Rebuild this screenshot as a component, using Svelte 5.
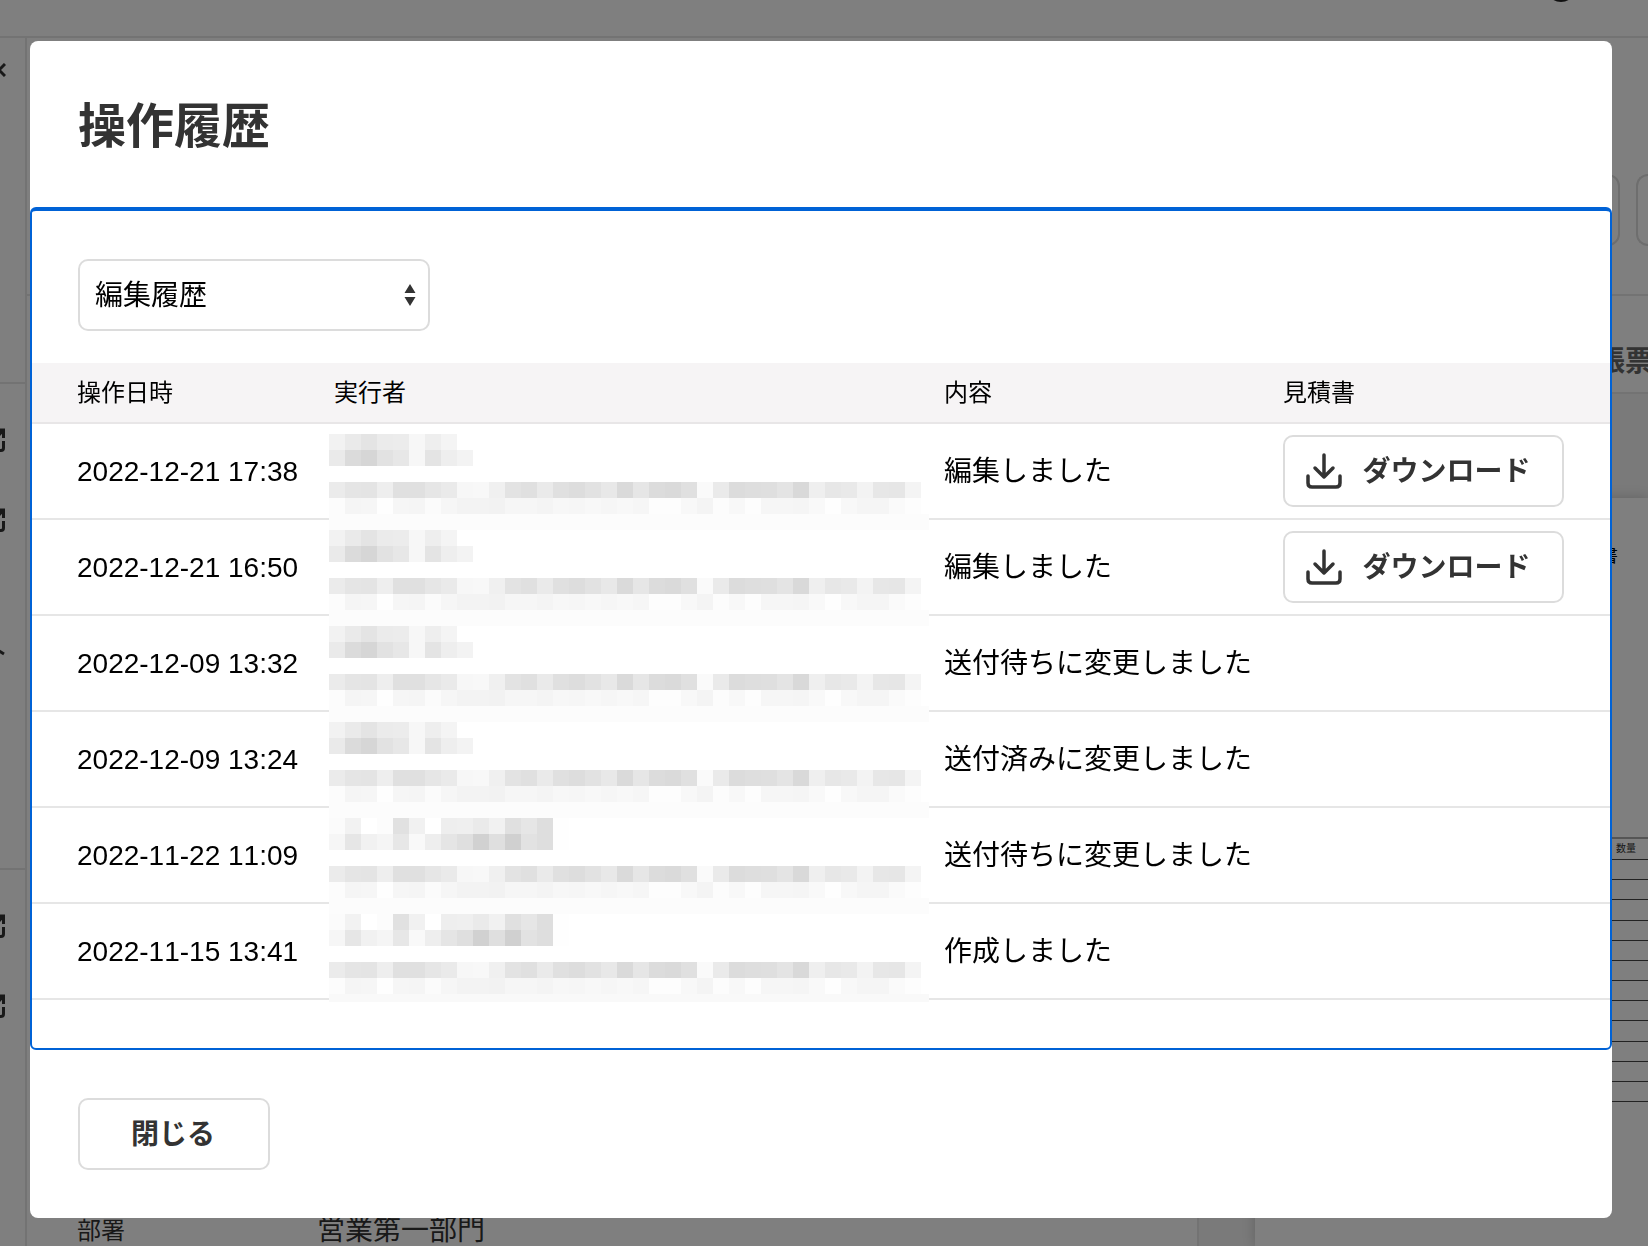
<script>
  const nameA = ['f2eae4ebecf7eef4', 'eadbd6e2e7f7e4eef3'];
  const nameB = ['fbf2fffce1f1ffeeefeaf1e0e6defe', 'f6e6f1f5e7f9eee5dfd1dfd0e2defe'];
  const mail = [
    'ebe5e4eee0e0e6eaf7f8f0e3e0eae0dde2e8dae6dcdae0faeadcdedfe4d9efe7e9f3e7e6f4',
    'fcf5f6fef6f5fbf6f3f3f2f6f6f4f7f6f8f6f8f6fdfdf8f4fcf8fdf6f6f5f9fef8f5f5fafd'
  ];

  const rows = [
    { date: '2022-12-21 17:38', name: nameA, text: '編集しました', file: true },
    { date: '2022-12-21 16:50', name: nameA, text: '編集しました', file: true },
    { date: '2022-12-09 13:32', name: nameA, text: '送付待ちに変更しました' },
    { date: '2022-12-09 13:24', name: nameA, text: '送付済みに変更しました' },
    { date: '2022-11-22 11:09', name: nameB, text: '送付待ちに変更しました' },
    { date: '2022-11-15 13:41', name: nameB, text: '作成しました' }
  ];

  // Each line is a run of two-digit grey levels, one per 16px tile.
  function tiles(name) {
    const lines = [name[0], name[1], '', mail[0], mail[1]];
    return lines.flatMap((line, y) =>
      (line.match(/../g) ?? []).map((g, x) => ({ x: x * 16, y: y * 16, fill: `#${g}${g}${g}` }))
    );
  }

  let kind = $state('edit');
</script>

<div class="page" aria-hidden="true">
  <div class="topbar"><span class="avatar"></span></div>
  <div class="columns">
    <div class="side">
      <div class="block first">
        <svg class="cross" viewBox="0 0 6 14"><path d="M5 1L-1 7L5 13" /></svg>
      </div>
      <div class="block second">
        {@render openIcon()}
        {@render openIcon()}
        <svg class="stroke" viewBox="0 0 6 8"><path d="M-1 2L4 5" /></svg>
      </div>
      <div class="block third">
        {@render openIcon()}
        {@render openIcon()}
      </div>
    </div>
    <div class="content">
      <div class="actions"><span class="ghost"></span><span class="ghost"></span></div>
      <div class="detail">
        <div class="fields"><span class="term">部署</span><span>営業第一部門</span></div>
        <div class="preview">
          <div class="tab">帳票</div>
          <div class="canvas">
            <div class="sheet">
              <div class="sheet-title">見積書</div>
              <div class="lines">
                <div class="line head">数量</div>
                {#each Array(12) as _}
                  <div class="line"></div>
                {/each}
              </div>
            </div>
          </div>
        </div>
      </div>
    </div>
  </div>
</div>

{#snippet openIcon()}
  <svg class="open" viewBox="0 0 6 24"><path d="M0 2H3.500V10M3.500 13V20Q3.500 22.500 1 22.500H0M2.500 3L-2 8" /></svg>
{/snippet}

<div class="overlay">
  <div class="modal" role="dialog" aria-modal="true" aria-labelledby="dialog-title">
    <header><h1 id="dialog-title">操作履歴</h1></header>
    <section class="body">
      <div class="filter">
        <select aria-label="履歴の種類" bind:value={kind}>
          <option value="edit">編集履歴</option>
        </select>
        <svg class="arrows" viewBox="0 0 12 24" aria-hidden="true">
          <path d="M6 1L11.500 10H0.500ZM6 23L11.500 14H0.500Z" />
        </svg>
      </div>
      <table>
        <thead>
          <tr>
            <th class="c-date">操作日時</th>
            <th class="c-user">実行者</th>
            <th class="c-text">内容</th>
            <th class="c-file">見積書</th>
          </tr>
        </thead>
        <tbody>
          {#each rows as row, i}
            <tr>
              <td class="c-date">{row.date}</td>
              <td class="c-user">
                <svg
                  class="mosaic"
                  class:last={i === rows.length - 1}
                  viewBox="0 0 600 96"
                  preserveAspectRatio="xMinYMin slice"
                  shape-rendering="crispEdges"
                  aria-hidden="true"
                >
                  <rect width="600" height="96" fill="#fff" />
                  <rect y="80" width="600" height="16" fill={i === rows.length - 1 ? '#f9f9f9' : '#fcfcfc'} />
                  {#each tiles(row.name) as t}
                    <rect x={t.x} y={t.y} width="16" height="16" fill={t.fill} />
                  {/each}
                </svg>
              </td>
              <td class="c-text">{row.text}</td>
              <td class="c-file">
                {#if row.file}
                  <button type="button" class="download">
                    <svg viewBox="0 0 36 36" aria-hidden="true">
                      <path d="M18 2V24M9 15L18 24L27 15M2 23V30Q2 34 6 34H30Q34 34 34 30V23" />
                    </svg>
                    <span>ダウンロード</span>
                  </button>
                {/if}
              </td>
            </tr>
          {/each}
        </tbody>
      </table>
    </section>
    <footer><button type="button" class="close">閉じる</button></footer>
  </div>
</div>

<style>
  :global(body) {
    font-family: 'Liberation Sans', 'Noto Sans CJK JP', sans-serif;
    font-size: 28px;
    font-kerning: none;
    color: #000;
    background: #fff;
  }
  .page,
  .page *,
  .overlay,
  .overlay * {
    box-sizing: border-box;
  }

  /* Page behind the dialog */
  .page {
    height: 100vh;
    display: flex;
    flex-direction: column;
    overflow: hidden;
    color: #333;
  }
  .topbar {
    flex: none;
    height: 38px;
    border-bottom: 2px solid #e6e6e6;
    display: flex;
    justify-content: flex-end;
    align-items: flex-start;
    padding-right: 72px;
  }
  .avatar {
    width: 30px;
    height: 30px;
    margin-top: -28px;
    border-radius: 50%;
    background: #222;
  }
  .columns {
    flex: 1;
    min-height: 0;
    display: flex;
  }
  .side {
    flex: none;
    width: 27px;
    border-right: 2px solid #e6e6e6;
    display: flex;
    flex-direction: column;
  }
  .block {
    display: flex;
    flex-direction: column;
  }
  .block.first {
    height: 346px;
    padding-top: 25px;
    border-bottom: 2px solid #e6e6e6;
  }
  .block.second {
    height: 486px;
    padding-top: 44px;
    gap: 56px;
    border-bottom: 2px solid #e6e6e6;
  }
  .block.third {
    padding-top: 44px;
    gap: 56px;
  }
  .side svg {
    fill: none;
    stroke: #333;
    stroke-width: 3;
    width: 6px;
    display: block;
  }
  .side .open {
    height: 24px;
  }
  .cross {
    height: 14px;
  }
  .stroke {
    height: 8px;
    margin-top: 61px;
  }
  .content {
    flex: 1;
    min-width: 0;
    display: flex;
    flex-direction: column;
  }
  .actions {
    flex: none;
    height: 258px;
    border-bottom: 2px solid #e6e6e6;
    display: flex;
    justify-content: flex-end;
    align-items: flex-start;
    gap: 16px;
    padding-top: 136px;
  }
  .ghost {
    width: 160px;
    height: 72px;
    border: 2px solid #dcdcdc;
    border-radius: 12px;
  }
  .ghost:last-child {
    width: 12px;
    border-right: 0;
    border-radius: 12px 0 0 12px;
  }
  .detail {
    flex: 1;
    min-height: 0;
    display: flex;
  }
  .fields {
    flex: 1;
    display: flex;
    align-items: flex-end;
    padding-left: 50px;
    line-height: 30px;
  }
  .term {
    width: 240px;
    font-size: 24px;
  }
  .preview {
    flex: none;
    width: 451px;
    border-left: 2px solid #e6e6e6;
    display: flex;
    flex-direction: column;
  }
  .tab {
    flex: none;
    height: 98px;
    border-bottom: 2px solid #e6e6e6;
    padding-left: 398px;
    padding-top: 42px;
    line-height: 48px;
    font-weight: 700;
    white-space: nowrap;
    color: #666;
  }
  .canvas {
    flex: 1;
    padding: 104px 0 0 56px;
    background: #f4f4f4;
    display: flex;
  }
  .sheet {
    flex: 1;
    background: #fff;
    box-shadow: 0 0 12px rgba(0, 0, 0, 0.2);
    padding-top: 44px;
  }
  .sheet-title {
    font-size: 18px;
    line-height: 28px;
    text-align: right;
    padding-right: 30px;
    color: #000;
  }
  .lines {
    margin-top: 267px;
    height: 265px;
    display: flex;
    flex-direction: column;
    border-top: 2px solid #aaa;
  }
  .line {
    flex: 1;
    border-bottom: 1px solid #444;
  }
  .line.head {
    font-size: 10px;
    line-height: 20px;
    font-weight: 400;
    text-align: right;
    padding-right: 12px;
  }

  /* Dialog */
  .overlay {
    position: fixed;
    inset: 0;
    padding: 41px 36px 28px 30px;
    background: rgba(0, 0, 0, 0.5);
    display: flex;
  }
  .modal {
    flex: 1;
    min-width: 0;
    display: flex;
    flex-direction: column;
    background: #fff;
    border-radius: 8px;
    overflow: hidden;
  }
  header {
    padding: 50px 48px 44px;
  }
  h1 {
    margin: 0;
    font-size: 48px;
    line-height: 72px;
    font-weight: 700;
    color: #333;
  }
  .body {
    flex: 1;
    min-height: 0;
    border: 2px solid #0062d6;
    border-top-width: 4px;
    border-radius: 6px;
    padding: 48px 0;
    overflow: hidden;
  }
  .filter {
    position: relative;
    width: 352px;
    margin: 0 46px 32px;
  }
  select {
    appearance: none;
    display: block;
    width: 100%;
    height: 72px;
    padding: 0 48px 0 15px;
    border: 2px solid #dcdcdc;
    border-radius: 10px;
    background: #fff;
    font: inherit;
    color: #000;
  }
  .arrows {
    position: absolute;
    right: 14px;
    top: 24px;
    width: 12px;
    height: 24px;
    fill: #333;
    pointer-events: none;
  }
  table {
    width: 100%;
    table-layout: fixed;
    border-collapse: separate;
    border-spacing: 0;
  }
  th {
    height: 61px;
    padding: 0 0 4px;
    background: #f6f4f5;
    border-bottom: 2px solid #e8e6e7;
    font-size: 24px;
    font-weight: 400;
    text-align: left;
  }
  td {
    height: 96px;
    padding: 2px 0 0;
    border-bottom: 2px solid #e6e6e6;
    line-height: 40px;
    white-space: nowrap;
  }
  .c-date {
    width: 297px;
    padding-left: 45px;
  }
  .c-user {
    position: relative;
    padding-left: 5px;
  }
  .c-text {
    width: 339px;
    padding-left: 15px;
  }
  .c-file {
    width: 342px;
    padding-top: 0;
    padding-left: 15px;
  }
  .mosaic {
    position: absolute;
    left: 0;
    top: 10px;
    width: 100%;
    height: 96px;
  }
  .mosaic.last {
    height: 88px;
  }
  button {
    height: 72px;
    border: 2px solid #dcdcdc;
    border-radius: 10px;
    background: #fff;
    font: inherit;
    font-weight: 700;
    color: #333;
    display: flex;
    align-items: center;
    justify-content: center;
  }
  .download {
    width: 281px;
    padding: 0 10px 0 0;
    gap: 20px;
  }
  .download span {
    padding-top: 2px;
  }
  .download svg {
    flex: none;
    width: 36px;
    height: 36px;
    fill: none;
    stroke: #333;
    stroke-width: 3.5;
    stroke-linecap: round;
    stroke-linejoin: round;
  }
  footer {
    padding: 48px;
  }
  .close {
    width: 192px;
    padding: 0 2px 4px 0;
  }
</style>
